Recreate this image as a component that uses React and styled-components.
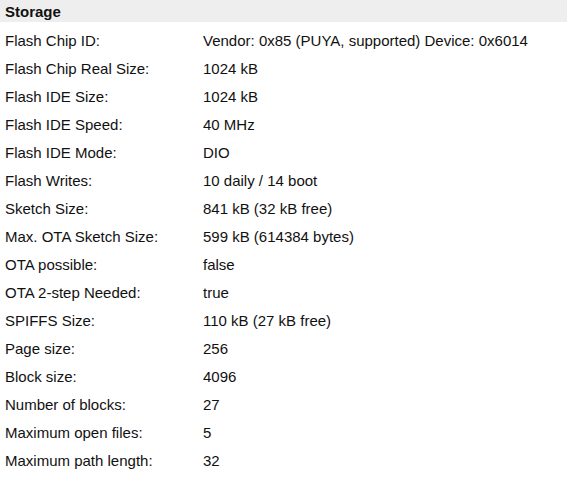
import styled, { createGlobalStyle } from 'styled-components';

const GlobalStyle = createGlobalStyle`
    body {
        margin: 0;
        background: #fff;
        font-family: "Liberation Sans", Arial, sans-serif;
        color: #111;
    }
`;

const Panel = styled.div`
    width: 567px;
`;

const Header = styled.div`
    height: 22px;
    background: #eeeeee;
    padding: 0 5px;
    display: flex;
    align-items: center;
    font-size: 15px;
    font-weight: bold;
`;

const Body = styled.div`
    padding-top: 4px;
`;

const Row = styled.div`
    display: grid;
    grid-template-columns: 198px 1fr;
    height: 28px;
    align-items: center;
    padding-left: 5px;
    font-size: 15px;
`;

const rows = [
    ['Flash Chip ID:', 'Vendor: 0x85 (PUYA, supported) Device: 0x6014'],
    ['Flash Chip Real Size:', '1024 kB'],
    ['Flash IDE Size:', '1024 kB'],
    ['Flash IDE Speed:', '40 MHz'],
    ['Flash IDE Mode:', 'DIO'],
    ['Flash Writes:', '10 daily / 14 boot'],
    ['Sketch Size:', '841 kB (32 kB free)'],
    ['Max. OTA Sketch Size:', '599 kB (614384 bytes)'],
    ['OTA possible:', 'false'],
    ['OTA 2-step Needed:', 'true'],
    ['SPIFFS Size:', '110 kB (27 kB free)'],
    ['Page size:', '256'],
    ['Block size:', '4096'],
    ['Number of blocks:', '27'],
    ['Maximum open files:', '5'],
    ['Maximum path length:', '32'],
];

export default function App() {
    return (
        <>
            <GlobalStyle />
            <Panel>
                <Header>Storage</Header>
                <Body>
                    {rows.map(([label, value]) => (
                        <Row key={label}>
                            <span>{label}</span>
                            <span>{value}</span>
                        </Row>
                    ))}
                </Body>
            </Panel>
        </>
    );
}
